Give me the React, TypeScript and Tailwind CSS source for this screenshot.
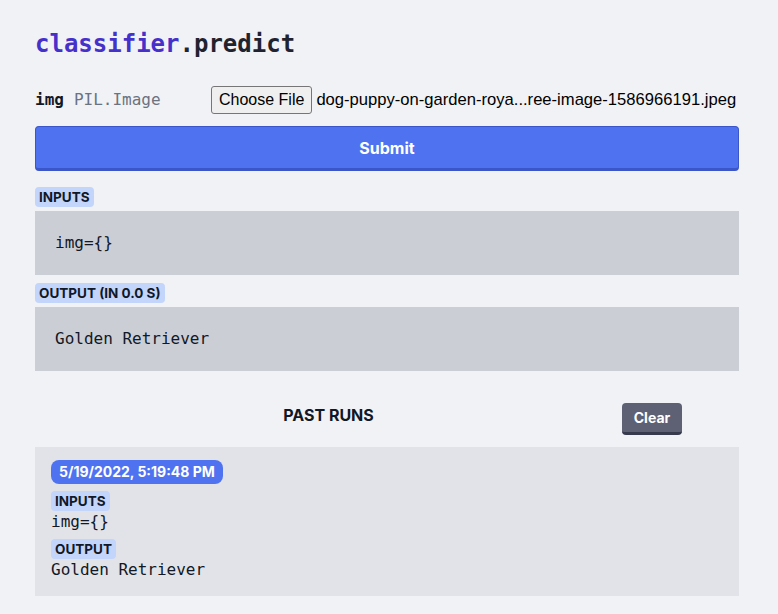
import React from "react";

const mono = "font-['DejaVu_Sans_Mono',monospace]";
const sans = "font-['Inter',sans-serif]";

const Badge = ({ children }: { children: React.ReactNode }) => (
  <div
    className={`w-fit rounded bg-[#c3d5fb] px-1 text-[13.5px] font-bold leading-5 text-[#111827] ${sans}`}
  >
    {children}
  </div>
);

export default function App() {
  return (
    <div className="min-h-[614px] bg-[#f1f2f6] pl-[35px] pr-[39px] pt-7 text-[#111827]">
      <h1 className={`text-[24px] font-bold leading-8 ${mono}`}>
        <span className="text-[#4531c9]">classifier</span>
        <span className="text-[#1f2330]">.predict</span>
      </h1>

      <div className="mt-[26px] flex h-7 items-center">
        <div className={`w-[176px] text-[16px] ${mono}`}>
          <span className="font-bold">img</span>
          <span className="ml-[10px] text-[#6b7280]">PIL.Image</span>
        </div>
        <button className="h-7 rounded-[3px] border border-[#767676] bg-[#efefef] px-[7px] font-['Liberation_Sans',sans-serif] text-[16px] text-black">
          Choose File
        </button>
        <span className="ml-[4px] whitespace-nowrap font-['Liberation_Sans',sans-serif] text-[16.6px] text-black">
          dog-puppy-on-garden-roya...ree-image-1586966191.jpeg
        </span>
      </div>

      <button
        className={`mt-3 flex h-[45px] w-full items-center justify-center rounded border border-[#3a56c9] border-b-[3px] bg-[#4f73f0] text-[16px] font-bold text-white ${sans}`}
      >
        Submit
      </button>

      <div className="mt-4">
        <Badge>INPUTS</Badge>
      </div>
      <div className={`mt-1 flex h-16 items-center bg-[#cbced5] px-5 text-[16px] ${mono}`}>
        img={"{}"}
      </div>

      <div className="mt-2">
        <Badge>OUTPUT (IN 0.0 S)</Badge>
      </div>
      <div className={`mt-1 flex h-16 items-center bg-[#cbced5] px-5 text-[16px] ${mono}`}>
        Golden Retriever
      </div>

      <div className="mt-8 flex items-start">
        <div className={`flex-1 text-center text-[16px] font-bold leading-6 ${sans}`}>PAST RUNS</div>
        <button
          className={`mr-[57px] h-8 w-[60px] rounded border-b-[3px] border-[#363a4c] bg-[#5e6173] text-[14px] font-bold text-white ${sans}`}
        >
          Clear
        </button>
      </div>

      <div className="mt-3 bg-[#e2e3e8] px-4 pb-[15px] pt-[13px]">
        <div
          className={`w-fit rounded-lg bg-[#4f73f0] px-2 text-[14px] font-bold leading-6 text-white ${sans}`}
        >
          5/19/2022, 5:19:48 PM
        </div>
        <div className="mt-[7px]">
          <Badge>INPUTS</Badge>
        </div>
        <div className={`text-[16px] leading-[22px] ${mono}`}>img={"{}"}</div>
        <div className="mt-[6px]">
          <Badge>OUTPUT</Badge>
        </div>
        <div className={`text-[16px] leading-[22px] ${mono}`}>Golden Retriever</div>
      </div>
    </div>
  );
}
